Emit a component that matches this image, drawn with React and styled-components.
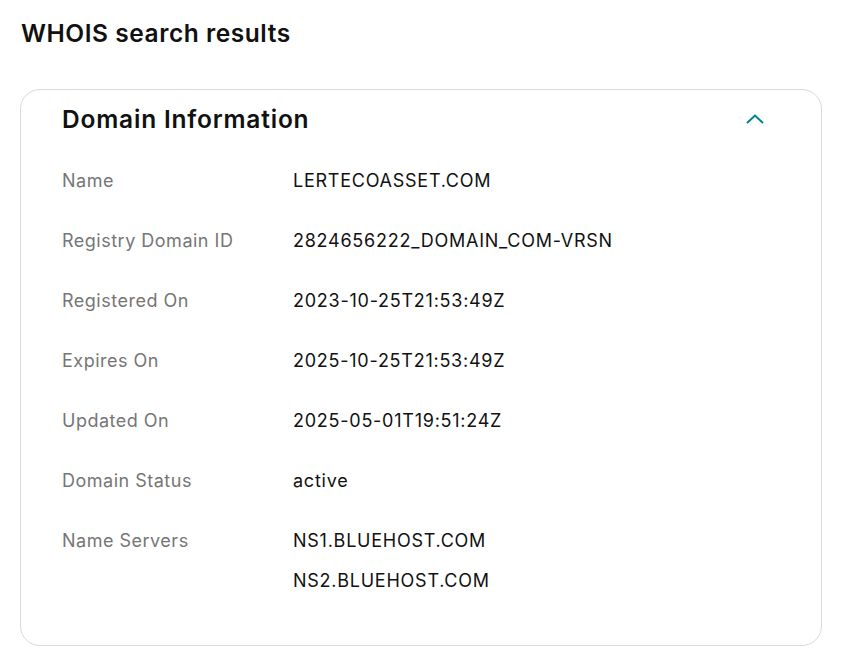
import React from "react"
import styled, { createGlobalStyle } from "styled-components"

const GlobalStyle = createGlobalStyle`
  html, body {
    margin: 0;
    padding: 0;
    background: #ffffff;
  }
  body {
    font-family: Inter, "Noto Sans", "Liberation Sans", sans-serif;
    color: #111111;
  }
`

const Page = styled.div`
  padding: 16px 21px 0 20px;
`

const PageTitle = styled.h1`
  margin: 0 0 0 1px;
  font-size: 24.5px;
  line-height: 34px;
  font-weight: 600;
  letter-spacing: 0.55px;
  color: #111111;
`

const Card = styled.section`
  margin-top: 39px;
  border: 1px solid #d6dadd;
  border-radius: 20px;
  padding: 0 56px 44px 41px;
`

const Header = styled.div`
  display: flex;
  align-items: center;
  justify-content: space-between;
  height: 58px;
`

const CardTitle = styled.h2`
  margin: 0;
  font-size: 24.5px;
  font-weight: 600;
  letter-spacing: 0.8px;
  color: #111111;
`

const Toggle = styled.button`
  border: none;
  background: none;
  padding: 0;
  display: flex;
  color: #00838a;
  cursor: pointer;
`

const Rows = styled.dl`
  margin: 13px 0 0;
  display: grid;
  grid-template-columns: 231px 1fr;
  row-gap: 20px;
`

const Label = styled.dt`
  margin: 0;
  font-size: 18px;
  line-height: 40px;
  letter-spacing: 0.5px;
  color: #767676;
`

const Values = styled.dd`
  margin: 0;
  font-size: 18px;
  line-height: 40px;
  letter-spacing: 0.75px;
  color: #111111;
`

const rows = [
  ["Name", ["LERTECOASSET.COM"]],
  ["Registry Domain ID", ["2824656222_DOMAIN_COM-VRSN"]],
  ["Registered On", ["2023-10-25T21:53:49Z"]],
  ["Expires On", ["2025-10-25T21:53:49Z"]],
  ["Updated On", ["2025-05-01T19:51:24Z"]],
  ["Domain Status", ["active"]],
  ["Name Servers", ["NS1.BLUEHOST.COM", "NS2.BLUEHOST.COM"]],
]

export default function App() {
  return (
    <>
      <GlobalStyle />
      <Page>
        <PageTitle>WHOIS search results</PageTitle>
        <Card>
          <Header>
            <CardTitle>Domain Information</CardTitle>
            <Toggle aria-label="Collapse">
              <svg width="20" height="12" viewBox="0 0 20 12" fill="none">
                <path d="M2 10 L10 2.5 L18 10" stroke="currentColor" strokeWidth="2" />
              </svg>
            </Toggle>
          </Header>
          <Rows>
            {rows.map(([label, values]) => (
              <React.Fragment key={label}>
                <Label>{label}</Label>
                <Values>
                  {values.map(v => (
                    <div key={v}>{v}</div>
                  ))}
                </Values>
              </React.Fragment>
            ))}
          </Rows>
        </Card>
      </Page>
    </>
  )
}
